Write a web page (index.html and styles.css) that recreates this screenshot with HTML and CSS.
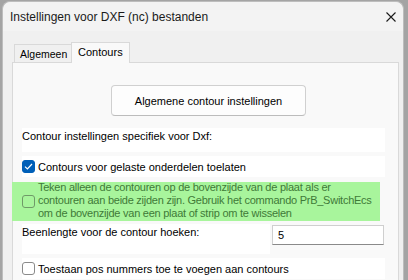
FILE: index.html
```html
<!DOCTYPE html>
<html lang="nl">
<head>
    <meta charset="UTF-8">
    <title>Instellingen voor DXF (nc) bestanden</title>
    <link rel="stylesheet" href="styles.css">
</head>
<body>
    <div class="window">
        <div class="titlebar">
            <span class="title">Instellingen voor DXF (nc) bestanden</span>
            <svg class="close" width="10" height="10" viewBox="0 0 10 10">
                <path d="M0.5 0.5 L9.5 9.5 M9.5 0.5 L0.5 9.5" stroke="#1a1a1a" stroke-width="1.1" fill="none"/>
            </svg>
        </div>
        <div class="tabs">
            <div class="tab">Algemeen</div>
            <div class="tab active">Contours</div>
        </div>
        <div class="panel">
            <div class="btn-row">
                <button class="btn">Algemene contour instellingen</button>
            </div>
            <div class="row label-row">Contour instellingen specifiek voor Dxf:</div>
            <div class="row check-row">
                <span class="box checked">
                    <svg width="9" height="7" viewBox="0 0 9 7"><path d="M1 3.6 L3.4 6 L8 1" stroke="#fff" stroke-width="1.2" fill="none"/></svg>
                </span>
                <span>Contours voor gelaste onderdelen toelaten</span>
            </div>
            <div class="highlight">
                <span class="box"></span>
                <span class="long">Teken alleen de contouren op de bovenzijde van de plaat als er contouren aan beide zijden zijn. Gebruik het commando PrB_SwitchEcs om de bovenzijde van een plaat of strip om te wisselen</span>
            </div>
            <div class="field-row">
                <div class="field-label">Beenlengte voor de contour hoeken:</div>
                <div class="input">5</div>
            </div>
            <div class="row check-row last">
                <span class="box"></span>
                <span>Toestaan pos nummers toe te voegen aan contours</span>
            </div>
        </div>
    </div>
</body>
</html>
```

FILE: styles.css
```css
body, html {
    margin: 0;
    padding: 0;
    height: 100%;
    overflow: hidden;
    background-color: #a4a4a4;
    font-family: "Liberation Sans", Arial, sans-serif;
    font-size: 11px;
    color: #000;
}
.window {
    margin-left: 2px;
    margin-top: 1px;
    width: 402px;
    height: 279px;
    overflow: hidden;
    background-color: #f0f0f0;
    border: 1px solid #bdbdbd;
    border-bottom: none;
    border-radius: 8px 8px 0 0;
    box-sizing: border-box;
}
.titlebar {
    height: 29px;
    display: flex;
    align-items: center;
    justify-content: space-between;
    padding: 0 7px 0 7px;
    background-color: #f3f3f3;
    border-radius: 8px 8px 0 0;
}
.title {
    font-size: 12px;
    color: #1a1a1a;
}
.tabs {
    display: flex;
    align-items: flex-end;
    padding: 11px 0 0 11px;
    height: 20px;
}
.tab {
    height: 18px;
    padding: 1px 2px 0 5px;
    display: flex;
    align-items: center;
    white-space: nowrap;
    border: 1px solid #d9d9d9;
    border-bottom: none;
    border-right: none;
    box-sizing: border-box;
    width: 57px;
    font-size: 10.5px;
}
.tab.active {
    height: 21px;
    width: 59px;
    padding: 0 0 3px 6px;
    font-size: 11px;
    background-color: #f9f9f9;
    border-right: 1px solid #d9d9d9;
    margin-bottom: -1px;
    position: relative;
}
.panel {
    margin-left: 9px;
    width: 387px;
    height: 240px;
    background-color: #f9f9f9;
    border: 1px solid #d9d9d9;
    padding-left: 9px;
    box-sizing: border-box;
}
.btn-row {
    padding: 22px 0 0 89px;
}
.btn {
    width: 195px;
    height: 31px;
    font-family: inherit;
    font-size: 11px;
    color: #000;
    background-color: #fdfdfd;
    border: 1px solid #d0d0d0;
    border-bottom-color: #bcbcbc;
    border-radius: 4px;
    padding: 0;
}
.row {
    width: 363px;
    background-color: #fff;
}
.label-row {
    margin-top: 12px;
    height: 24px;
    line-height: 14px;
    padding-top: 1px;
    box-sizing: border-box;
}
.check-row {
    display: flex;
    align-items: center;
    gap: 3px;
    height: 21px;
    margin-top: 4px;
}
.box {
    width: 13px;
    height: 13px;
    box-sizing: border-box;
    border: 1px solid #8a8a8a;
    border-radius: 3px;
    flex-shrink: 0;
    display: flex;
    align-items: center;
    justify-content: center;
}
.box.checked {
    background-color: #005fb8;
    border-color: #005fb8;
}
.highlight {
    margin: 5px 0 0 -10px;
    width: 368px;
    height: 39px;
    background-color: #a8f59c;
    display: flex;
    align-items: center;
    gap: 3px;
    padding-left: 10px;
    box-sizing: border-box;
    color: #3f7a38;
}
.highlight .box {
    border-color: #6f9a68;
}
.long {
    line-height: 13px;
    letter-spacing: -0.25px;
    margin-top: -2px;
}
.field-row {
    display: flex;
    align-items: flex-start;
    margin-top: 3px;
}
.field-label {
    width: 248px;
    height: 30px;
    background-color: #fff;
    line-height: 14px;
    padding-top: 1px;
    box-sizing: border-box;
}
.input {
    margin: 1px 0 0 2px;
    width: 112px;
    height: 20px;
    box-sizing: border-box;
    background-color: #fff;
    border: 1px solid #cfcfcf;
    border-bottom-color: #8a8a8a;
    padding-left: 5px;
    line-height: 18px;
}
.check-row.last {
    margin-top: 4px;
}
```
